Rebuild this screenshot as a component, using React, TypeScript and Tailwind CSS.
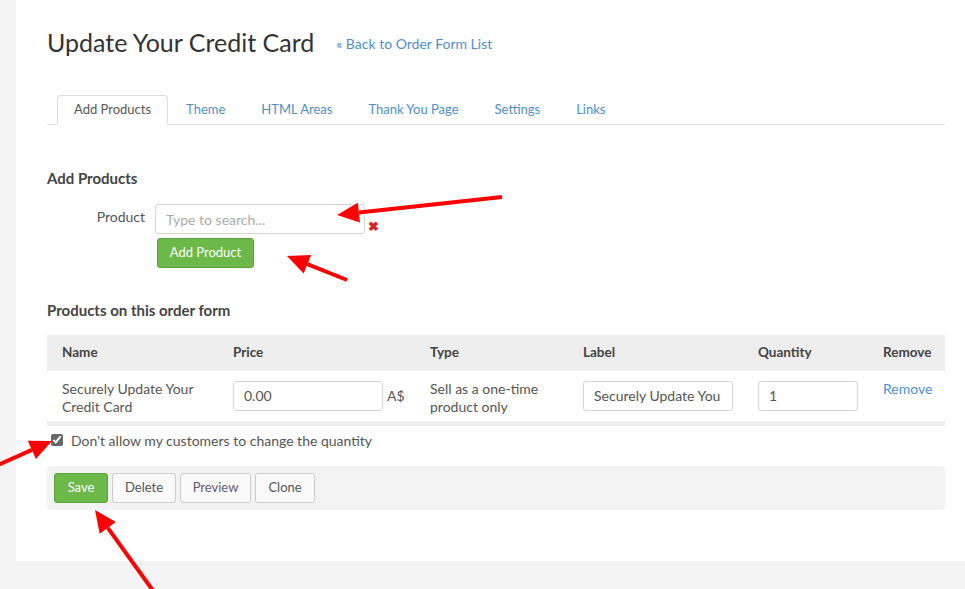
const font = { fontFamily: '"Lato", "Liberation Sans", sans-serif' };

function Arrows() {
  const arrows = [
    { line: [502, 197, 359, 212.6], head: '337,215 357.8,202.7 360,222.5' },
    { line: [347, 280, 307.4, 264.2], head: '287,256 311.1,254.9 303.7,273.5' },
    { line: [-2, 465, 31.9, 449.9], head: '52,441 35.9,459 27.8,440.8' },
    { line: [154, 592, 107.8, 527.9], head: '95,510 115.9,522.1 99.7,533.7' },
  ];
  return (
    <svg className="absolute inset-0 pointer-events-none" width="965" height="589">
      {arrows.map((a, i) => (
        <g key={i}>
          <line x1={a.line[0]} y1={a.line[1]} x2={a.line[2]} y2={a.line[3]} stroke="#ff0000" strokeWidth="4" />
          <polygon points={a.head} fill="#ff0000" />
        </g>
      ))}
    </svg>
  );
}

const inputCls = 'h-[30px] border border-[#d4d4d4] rounded-[3px] bg-white px-[10px] text-[14px] text-[#555] flex items-center';

export default function App() {
  return (
    <div className="relative w-[965px] h-[589px] bg-[#f3f3f3] overflow-hidden" style={font}>
      <div className="ml-[16px] h-[561px] bg-white pl-[31px] pr-[20px] pt-[27px] text-[13px] text-[#555]">
        <div className="flex items-center">
          <h1 className="text-[25px] leading-[30px] text-[#333]">Update Your Credit Card</h1>
          <a className="ml-[22px] mt-[2px] text-[14px] text-[#4d8fcc]">« Back to Order Form List</a>
        </div>

        <div className="mt-[38px] flex border-b border-[#ddd] pl-[10px] h-[30px]">
          <div className="h-[30px] px-[16px] flex items-center border border-[#ddd] border-b-white rounded-t-[4px] bg-white text-[#555]">
            Add Products
          </div>
          <div className="flex">
            {['Theme', 'HTML Areas', 'Thank You Page', 'Settings', 'Links'].map((t) => (
              <div key={t} className="h-[29px] px-[18px] flex items-center text-[#4d8fcc]">{t}</div>
            ))}
          </div>
        </div>

        <h2 className="mt-[43px] text-[15px] leading-[20px] font-bold text-[#444]">Add Products</h2>

        <div className="mt-[16px] flex items-start">
          <label className="w-[98px] pt-[3px] text-right text-[14px] leading-[20px] text-[#555]">Product</label>
          <div className="ml-[10px]">
            <div className="flex items-end">
              <div className={`${inputCls} w-[210px] text-[#aaa]`}>Type to search...</div>
              <span className="ml-[3px] mb-[1px] text-[13px] font-bold leading-[14px] text-[#d22]">✖</span>
            </div>
            <button className="mt-[4px] ml-[2px] h-[30px] w-[97px] rounded-[3px] border border-[#58a23a] bg-[#6cb94a] text-[13px] text-white">
              Add Product
            </button>
          </div>
        </div>

        <h2 className="mt-[32px] text-[15px] leading-[20px] font-bold text-[#444]">Products on this order form</h2>

        <div className="mt-[15px] w-[898px]">
          <div className="grid grid-cols-[171px_197px_153px_175px_125px_77px] h-[36px] bg-[#eee] items-center pb-[2px] text-[13.5px] font-bold text-[#444]">
            {['Name', 'Price', 'Type', 'Label', 'Quantity', 'Remove'].map((h) => (
              <div key={h} className="pl-[15px]">{h}</div>
            ))}
          </div>
          <div className="grid grid-cols-[171px_197px_153px_175px_125px_77px] h-[55px] pt-[9px] text-[14px] leading-[18px] border-b-[5px] border-[#eee]">
            <div className="pl-[15px]">Securely Update Your Credit Card</div>
            <div className="pl-[15px] pt-[1px] flex items-center self-start">
              <div className={`${inputCls} w-[150px]`}>0.00</div>
              <span className="ml-[4px]">A$</span>
            </div>
            <div className="pl-[15px]">Sell as a one-time product only</div>
            <div className="pl-[15px] pt-[1px]">
              <div className={`${inputCls} w-[150px] overflow-hidden whitespace-nowrap`}>Securely Update You</div>
            </div>
            <div className="pl-[15px] pt-[1px]">
              <div className={`${inputCls} w-[100px]`}>1</div>
            </div>
            <div className="pl-[15px] text-[#4d8fcc]">Remove</div>
          </div>

          <div className="mt-[5px] flex items-center h-[18px]">
            <input type="checkbox" defaultChecked className="ml-[4px] w-[12px] h-[12px] accent-[#666]" />
            <span className="ml-[8px] text-[14px]">Don't allow my customers to change the quantity</span>
          </div>

          <div className="mt-[17px] h-[44px] bg-[#f3f3f3] rounded-[4px] flex items-start pt-[7px] pl-[7px] gap-[4px]">
            <button className="h-[30px] w-[54px] rounded-[3px] border border-[#58a23a] bg-[#6cb94a] text-[13px] text-white">Save</button>
            <button className="h-[30px] w-[64px] rounded-[3px] border border-[#ccc] bg-[#fafafa] text-[13px] text-[#555]">Delete</button>
            <button className="h-[30px] w-[71px] rounded-[3px] border border-[#ccc] bg-[#fafafa] text-[13px] text-[#6a5878]">Preview</button>
            <button className="h-[30px] w-[60px] rounded-[3px] border border-[#ccc] bg-[#fafafa] text-[13px] text-[#555]">Clone</button>
          </div>
        </div>
      </div>
      <Arrows />
    </div>
  );
}
